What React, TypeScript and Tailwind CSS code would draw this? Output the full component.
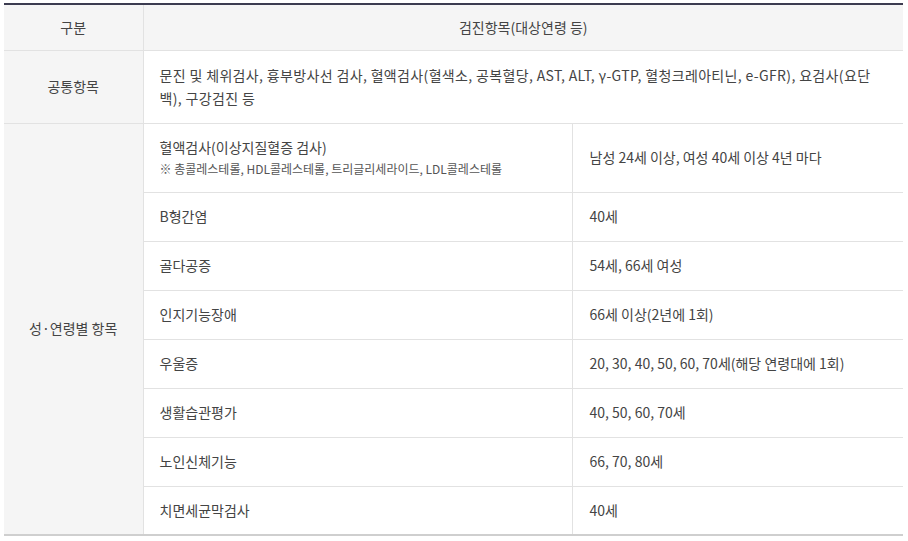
const rows: { item: React.ReactNode; target: string; h: string }[] = [
  {
    item: (
      <>
        <p>혈액검사(이상지질혈증 검사)</p>
        <p className="text-[12px] text-[#555] mt-[2px]">※ 총콜레스테롤, HDL콜레스테롤, 트리글리세라이드, LDL콜레스테롤</p>
      </>
    ),
    target: "남성 24세 이상, 여성 40세 이상 4년 마다",
    h: "h-[69px]",
  },
  { item: "B형간염", target: "40세", h: "h-[49px]" },
  { item: "골다공증", target: "54세, 66세 여성", h: "h-[49px]" },
  { item: "인지기능장애", target: "66세 이상(2년에 1회)", h: "h-[49px]" },
  { item: "우울증", target: "20, 30, 40, 50, 60, 70세(해당 연령대에 1회)", h: "h-[49px]" },
  { item: "생활습관평가", target: "40, 50, 60, 70세", h: "h-[49px]" },
  { item: "노인신체기능", target: "66, 70, 80세", h: "h-[49px]" },
  { item: "치면세균막검사", target: "40세", h: "h-[49px]" },
];

export default function App() {
  return (
    <div className="bg-white w-[908px] h-[541px] pt-[3px] pl-[4px] font-['Noto_Sans_CJK_KR','Noto_Sans',sans-serif] text-[14px] text-[#444]">
      <table className="w-[899px] border-collapse table-fixed border-t-2 border-t-[#3c3c50] border-b-2 border-b-[#cfcfcf]">
        <colgroup>
          <col className="w-[139px]" />
          <col className="w-[429px]" />
          <col className="w-[331px]" />
        </colgroup>
        <thead>
          <tr className="h-[46px] bg-[#f5f5f5]">
            <th className="font-normal text-center border-b border-r border-[#e2e2e2]">구분</th>
            <th colSpan={2} className="font-normal text-center border-b border-[#e2e2e2]">검진항목(대상연령 등)</th>
          </tr>
        </thead>
        <tbody>
          <tr className="h-[73px]">
            <td className="text-center bg-[#f5f5f5] border-b border-r border-[#e2e2e2]">공통항목</td>
            <td colSpan={2} className="pl-[16px] pr-[26px] leading-[23px] tracking-[0.35px] border-b border-[#e2e2e2]">
              문진 및 체위검사, 흉부방사선 검사, 혈액검사(혈색소, 공복혈당, AST, ALT, γ-GTP, 혈청크레아티닌, e-GFR), 요검사(요단백), 구강검진 등
            </td>
          </tr>
          {rows.map((r, i) => (
            <tr key={i} className={r.h}>
              {i === 0 && (
                <td rowSpan={rows.length} className="text-center bg-[#f5f5f5] border-r border-[#e2e2e2]">
                  성·연령별 항목
                </td>
              )}
              <td className={`px-[16px] border-r border-[#e2e2e2] ${i < rows.length - 1 ? "border-b" : ""}`}>{r.item}</td>
              <td className={`px-[17px] border-[#e2e2e2] ${i < rows.length - 1 ? "border-b" : ""}`}>{r.target}</td>
            </tr>
          ))}
        </tbody>
      </table>
    </div>
  );
}
